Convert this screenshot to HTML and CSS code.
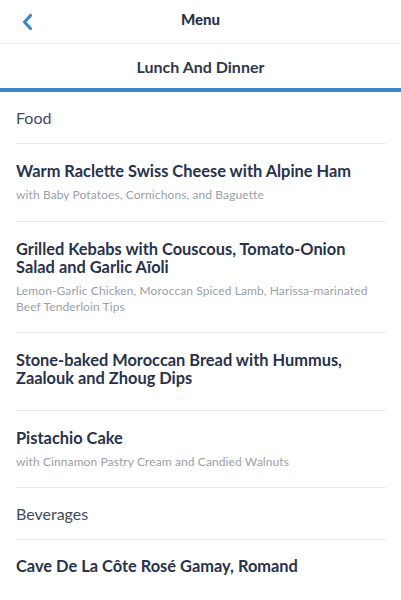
FILE: index.html
```html
<!DOCTYPE html>
<html lang="en">
<head>
    <meta charset="UTF-8">
    <meta name="viewport" content="width=device-width, initial-scale=1.0">
    <title>Menu</title>
    <link rel="stylesheet" href="styles.css">
</head>
<body>
    <div class="navbar">
        <a class="back" href="#">
            <svg width="12" height="18" viewBox="0 0 12 18">
                <path d="M9.5 2.5 L3.5 9 L9.5 15.5" fill="none" stroke="#3d87c6" stroke-width="3.2" stroke-linecap="round" stroke-linejoin="round"/>
            </svg>
        </a>
        <h1>Menu</h1>
    </div>
    <div class="tab">Lunch And Dinner</div>

    <div class="menu">
        <div class="section">Food</div>

        <div class="item">
            <div class="item-title">Warm Raclette Swiss Cheese with Alpine Ham</div>
            <div class="item-desc">with Baby Potatoes, Cornichons, and Baguette</div>
        </div>

        <div class="item">
            <div class="item-title">Grilled Kebabs with Couscous, Tomato-Onion Salad and Garlic Aïoli</div>
            <div class="item-desc">Lemon-Garlic Chicken, Moroccan Spiced Lamb, Harissa-marinated Beef Tenderloin Tips</div>
        </div>

        <div class="item item-plain">
            <div class="item-title">Stone-baked Moroccan Bread with Hummus, Zaalouk and Zhoug Dips</div>
        </div>

        <div class="item">
            <div class="item-title">Pistachio Cake</div>
            <div class="item-desc">with Cinnamon Pastry Cream and Candied Walnuts</div>
        </div>

        <div class="section">Beverages</div>

        <div class="item item-last">
            <div class="item-title">Cave De La Côte Rosé Gamay, Romand</div>
        </div>
    </div>
</body>
</html>
```

FILE: styles.css
```css
body {
    margin: 0;
    padding: 0;
    background: #fff;
    font-family: Lato, "Open Sans", sans-serif;
    color: #2b3445;
}
.navbar {
    height: 43px;
    display: flex;
    align-items: center;
    justify-content: center;
    position: relative;
    border-bottom: 1px solid #eceef0;
}
.navbar h1 {
    margin: 0 0 6px;
    font-size: 15px;
    font-weight: 900;
    color: #2b3445;
}
.back {
    position: absolute;
    left: 21px;
    top: 13px;
    line-height: 0;
}
.tab {
    height: 44px;
    display: flex;
    align-items: center;
    justify-content: center;
    font-size: 16px;
    font-weight: 700;
    color: #2f3848;
    border-bottom: 4px solid #3d87c6;
}
.menu {
    padding: 0 15px 0 16px;
}
.section {
    height: 51px;
    display: flex;
    align-items: center;
    font-size: 16px;
    color: #444b57;
    border-bottom: 1px solid #e6e8eb;
}
.item {
    padding: 18px 0 17.5px;
    border-bottom: 1px solid #e6e8eb;
}
.item-plain {
    padding-bottom: 22.5px;
}
.item-last {
    padding-top: 17px;
    border-bottom: none;
}
.item-title {
    font-size: 16.4px;
    line-height: 18px;
    font-weight: 700;
    color: #28324a;
}
.item-desc {
    margin-top: 7px;
    font-size: 12px;
    letter-spacing: 0.1px;
    line-height: 16px;
    color: #9aa0a8;
}
```
